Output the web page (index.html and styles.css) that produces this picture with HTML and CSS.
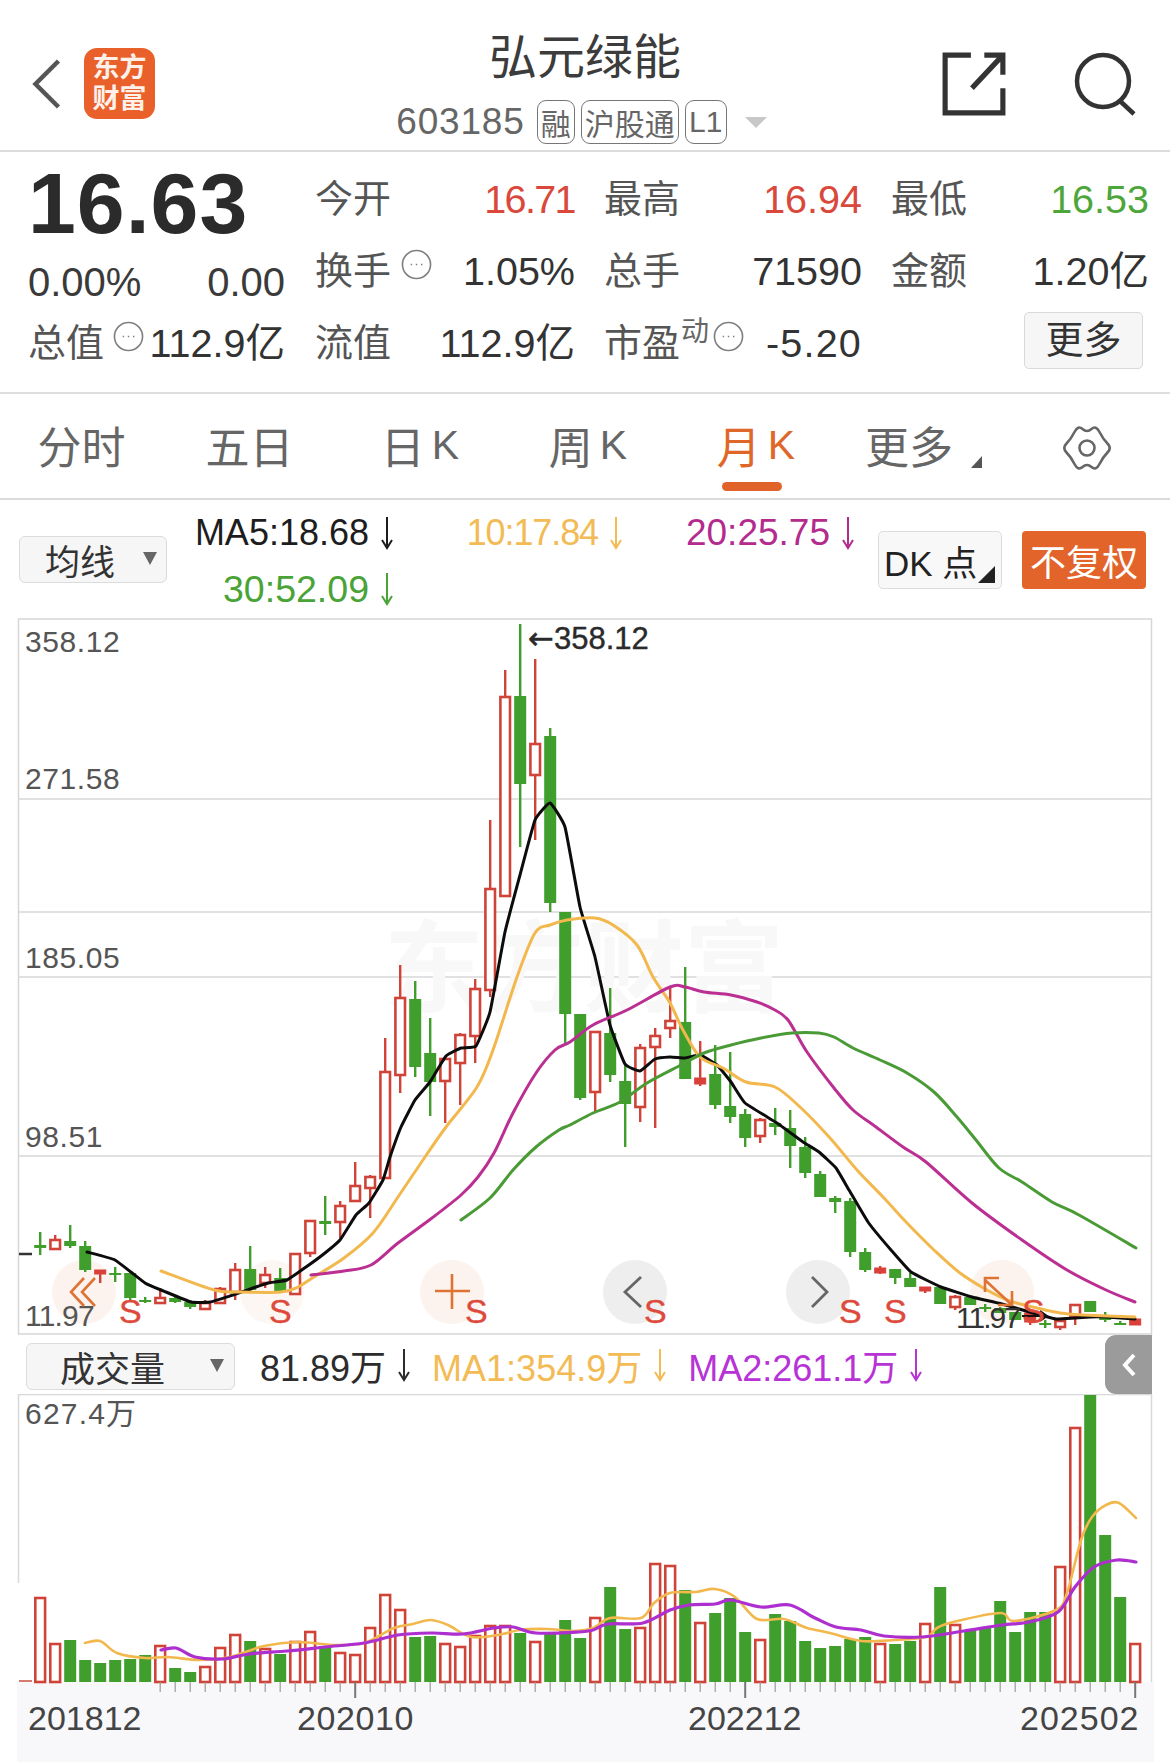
FILE: index.html
```html
<!DOCTYPE html>
<html lang="zh-CN">
<head>
<meta charset="utf-8">
<title>弘元绿能</title>
<link rel="stylesheet" href="styles.css">
</head>
<body>
<div class="page">
  <header class="topbar">
    <div class="side side-left">
      <svg class="back" viewBox="0 0 30 52"><path d="M27 3 4 26l23 23"/></svg>
      <div class="logo"><span>东方</span><span>财富</span></div>
    </div>
    <div class="center">
      <h1 class="title">弘元绿能</h1>
      <div class="sub">
        <span class="code">603185</span>
        <span class="tag tag-a">融</span>
        <span class="tag tag-b">沪股通</span>
        <span class="tag tag-c">L1</span>
        <i class="caret"></i>
      </div>
    </div>
    <div class="side side-right">
      <svg class="share" viewBox="0 0 64 64"><path d="M29 4H4v56h56V36M30 36 60 4M42 4h18v19"/></svg>
      <svg class="search" viewBox="0 0 64 64"><circle cx="30" cy="29" r="26"/><path d="M47 49l14 13"/></svg>
    </div>
  </header>

  <section class="quote">
    <div class="quote-left">
      <div class="price">16.63</div>
      <div class="change"><span>0.00%</span><span>0.00</span></div>
      <div class="cap">
        <span class="label">总值</span>
        <svg class="info info-cap" viewBox="0 0 32 32"><circle cx="16" cy="16" r="14.5"/><path d="M10 16h1.5M15.3 16h1.5M20.6 16h1.5"/></svg>
        <span class="val">112.9亿</span>
      </div>
    </div>
    <div class="quote-grid">
      <div class="cell"><span class="label">今开</span><span class="val red val-tight">16.71</span></div>
      <div class="cell"><span class="label">最高</span><span class="val red">16.94</span></div>
      <div class="cell"><span class="label">最低</span><span class="val green">16.53</span></div>
      <div class="cell">
        <span class="label-group"><span class="label">换手</span><svg class="info" viewBox="0 0 32 32"><circle cx="16" cy="16" r="14.5"/><path d="M10 16h1.5M15.3 16h1.5M20.6 16h1.5"/></svg></span>
        <span class="val">1.05%</span>
      </div>
      <div class="cell"><span class="label">总手</span><span class="val">71590</span></div>
      <div class="cell"><span class="label">金额</span><span class="val">1.20亿</span></div>
      <div class="cell"><span class="label">流值</span><span class="val">112.9亿</span></div>
      <div class="cell">
        <span class="label-group"><span class="label">市盈</span><sup class="sup">动</sup><svg class="info info-pe" viewBox="0 0 32 32"><circle cx="16" cy="16" r="14.5"/><path d="M10 16h1.5M15.3 16h1.5M20.6 16h1.5"/></svg></span>
        <span class="val val-wide">-5.20</span>
      </div>
      <div class="cell cell-end"><button class="more">更多</button></div>
    </div>
  </section>

  <nav class="tabs">
    <div class="tab tab-left">分时</div>
    <div class="tab tab-left">五日</div>
    <div class="tab">日<span class="k">K</span></div>
    <div class="tab">周<span class="k">K</span></div>
    <div class="tab active">月<span class="k">K</span></div>
    <div class="tab tab-more">更多<i class="corner"></i></div>
    <div class="tab tab-gear">
      <svg class="gear" viewBox="0 0 48 46"><path d="M3.5 18.5Q8 14 11.5 7 15 0 19.5 4 24 8 28.5 4 33 0 36.5 7 40 14 44.5 18.5 49 23 44.5 27.5 40 32 36.5 39 33 46 28.5 42 24 38 19.5 42 15 46 11.5 39 8 32 3.5 27.5-1 23 3.5 18.5Z"/><circle cx="24" cy="23" r="7.5"/></svg>
    </div>
  </nav>

  <section class="ma-bar">
    <div class="select select-ma"><span>均线</span><i class="tri"></i></div>
    <div class="ma-values">
      <span class="ma c-black">MA5:18.68<svg class="arrow" viewBox="0 0 16 34"><path d="M8 1v31M3 24l5 8 5-8"/></svg></span>
      <span class="ma c-yellow ma-tight">10:17.84<svg class="arrow" viewBox="0 0 16 34"><path d="M8 1v31M3 24l5 8 5-8"/></svg></span>
      <span class="ma c-magenta ma-wide">20:25.75<svg class="arrow" viewBox="0 0 16 34"><path d="M8 1v31M3 24l5 8 5-8"/></svg></span>
      <span class="ma c-green ma-wider">30:52.09<svg class="arrow" viewBox="0 0 16 34"><path d="M8 1v31M3 24l5 8 5-8"/></svg></span>
    </div>
    <button class="btn-dk">DK 点<i class="dk-corner"></i></button>
    <button class="btn-adj">不复权</button>
  </section>

  <svg id="kline" class="chart" viewBox="0 618 1170 717" width="1170" height="717">
    <rect class="frame" x="18.5" y="619" width="1133" height="715"/>
    <path class="grid" d="M18 799H1152M18 912H1152M18 977H1152M18 1156H1152"/>
    <text class="watermark" x="384" y="1004">东方财富</text>
    <text class="axis" x="25" y="652">358.12</text>
    <text class="axis" x="25" y="789">271.58</text>
    <text class="axis" x="25" y="968">185.05</text>
    <text class="axis" x="25" y="1147">98.51</text>
    <circle class="dot-o" cx="84" cy="1292" r="32"/>
    <circle class="dot-f" cx="272" cy="1292" r="32"/>
    <circle class="dot-o" cx="452" cy="1292" r="32"/>
    <circle class="dot-g" cx="635" cy="1292" r="32"/>
    <circle class="dot-g" cx="818" cy="1292" r="32"/>
    <circle class="dot-o" cx="1002" cy="1292" r="32"/>
    <path class="dash" d="M19 1254H32"/>
    <g id="candles"></g>
    <path id="ma5" class="line l-black"/>
    <path id="ma10" class="line l-yellow"/>
    <path id="ma20" class="line l-magenta"/>
    <path id="ma30" class="line l-green"/>
    <text class="hi" x="528" y="649"><tspan class="hi-arrow">←</tspan><tspan>358.12</tspan></text>
    <text class="axis axis-low" x="25" y="1326">11.97</text>
    <text class="lo" x="956" y="1328">11.97</text>
    <path class="lo-arrow" d="M1022 1316H1046M1040 1311l7 5-7 5"/>
    <path class="ctl-o" d="M84 1278l-13 14 13 14M95 1278l-13 14 13 14"/>
    <path class="ctl-o" d="M452 1274v35M435 1291h35"/>
    <path class="ctl-g" d="M641 1277l-16 15 16 15"/>
    <path class="ctl-g" d="M812 1277l15 15-15 15"/>
    <path class="ctl-o" d="M985 1280l27 25M985 1292v-14h14M1012 1291v14h-14"/>
    <text class="s" x="119" y="1323">S</text>
    <text class="s" x="269" y="1323">S</text>
    <text class="s" x="465" y="1323">S</text>
    <text class="s" x="644" y="1323">S</text>
    <text class="s" x="839" y="1323">S</text>
    <text class="s" x="884" y="1323">S</text>
    <text class="s" x="1022" y="1323">S</text>
  </svg>

  <section class="vol-bar">
    <div class="select select-vol"><span>成交量</span><i class="tri"></i></div>
    <span class="ma vol-val c-dark">81.89万<svg class="arrow" viewBox="0 0 16 34"><path d="M8 1v31M3 24l5 8 5-8"/></svg></span>
    <span class="ma vol-val c-yellow">MA1:354.9万<svg class="arrow" viewBox="0 0 16 34"><path d="M8 1v31M3 24l5 8 5-8"/></svg></span>
    <span class="ma vol-val c-purple">MA2:261.1万<svg class="arrow" viewBox="0 0 16 34"><path d="M8 1v31M3 24l5 8 5-8"/></svg></span>
    <div class="collapse"><svg viewBox="0 0 16 26"><path d="M13 3 4 13l9 10"/></svg></div>
  </section>

  <svg id="volume" class="chart" viewBox="0 1394 1170 368" width="1170" height="368">
    <rect class="axis-bg" x="17" y="1682" width="1137" height="80"/>
    <path class="grid" d="M18 1394.5H1152M18.5 1394V1583M1151.5 1394V1682"/>
    <text class="axis axis-vol" x="25" y="1424">627.4万</text>
    <g id="bars"></g>
    <g id="ticks"></g>
    <path id="vma1" class="line thin l-yellow"/>
    <path id="vma2" class="line l-purple"/>
    <text class="date" x="28" y="1730">201812</text>
    <text class="date date-wide" x="297" y="1730">202010</text>
    <text class="date" x="688" y="1730">202212</text>
    <text class="date date-wider" x="1020" y="1730">202502</text>
  </svg>
</div>
<script src="chart.js"></script>
</body>
</html>
```

FILE: styles.css
```css
* { box-sizing: border-box; }
html, body { margin: 0; padding: 0; background: #fff; }
body {
  font-family: "Liberation Sans", "Noto Sans CJK SC", sans-serif;
  color: #333;
}
.page { width: 1170px; height: 1762px; overflow: hidden; }
button { font: inherit; padding: 0; }
i { display: block; font-style: normal; }

/* top bar */
.topbar {
  display: grid;
  grid-template-columns: 1fr auto 1fr;
  height: 152px;
  border-bottom: 2px solid #dcdcdc;
}
.side { display: flex; align-items: center; padding-top: 17px; }
.side-left { padding-left: 31px; gap: 22px; }
.side-right { justify-content: flex-end; padding-right: 33px; gap: 66px; }
.back { width: 31px; height: 52px; fill: none; stroke: #555; stroke-width: 4.5; }
.logo {
  width: 71px; height: 71px;
  border-radius: 13px;
  background: #e9602a;
  color: #fdf1ea;
  display: flex; flex-direction: column; align-items: center; justify-content: center;
  font-size: 27px; line-height: 31px; font-weight: 700;
}
.share { width: 66px; height: 66px; fill: none; stroke: #333; stroke-width: 5; }
.search { width: 64px; height: 64px; fill: none; stroke: #333; stroke-width: 4.5; }
.center { display: flex; flex-direction: column; align-items: center; padding-top: 28px; }
.title { margin: 0; font-size: 48px; line-height: 60px; font-weight: 400; color: #3c3c3c; }
.sub { display: flex; align-items: center; gap: 6px; margin-top: 12px; height: 44px; padding-right: 7px; }
.code { font-size: 37px; color: #666; margin-right: 6px; letter-spacing: .8px; }
.tag {
  height: 44px; display: flex; align-items: center; justify-content: center;
  border: 1.5px solid #777; border-radius: 9px;
  font-size: 30px; color: #666; white-space: nowrap;
}
.tag-a { width: 38px; }
.tag-b { width: 98px; }
.tag-c { width: 42px; }
.caret {
  margin-left: 12px; width: 0; height: 0;
  border-left: 11px solid transparent; border-right: 11px solid transparent;
  border-top: 11px solid #c8c8c8;
}

/* quote */
.quote {
  display: flex;
  height: 242px;
  padding: 11px 0 0 28px;
  border-bottom: 2px solid #dedede;
}
.quote-left { width: 259px; margin-right: 28px; flex: none; }
.price {
  font-size: 86px; line-height: 80px; font-weight: 700; color: #2b2b2b;
  letter-spacing: 1px;
}
.change {
  display: flex; justify-content: space-between;
  margin-top: 19px; padding-right: 2px;
  font-size: 40px; line-height: 40px; color: #3a3a3a;
}
.cap { display: flex; align-items: center; margin-top: 21px; height: 40px; padding-right: 2px; }
.cap .val { margin-left: auto; }
.label { font-size: 38px; line-height: 44px; color: #555; white-space: nowrap; }
.val { font-size: 39.5px; line-height: 44px; color: #333; white-space: nowrap; }
.val-tight { letter-spacing: -1.6px; }
.val-wide { letter-spacing: 1.2px; }
.red { color: #d9483b; }
.green { color: #4da63a; }
.quote-grid {
  display: grid;
  grid-template-columns: 260px 258px 258px;
  grid-auto-rows: 72px;
  column-gap: 29px;
}
.cell { display: flex; align-items: center; justify-content: space-between; }
.cell-end { justify-content: flex-end; padding-right: 6px; }
.label-group { display: flex; align-items: center; }
.info {
  width: 31px; height: 31px;
  margin: 0 0 14px 10px;
  fill: none; stroke: #808080; stroke-width: 1.7;
}
.info-cap { margin: 0 0 14px 9px; flex: none; }
.info-pe { margin: 0 0 14px 4px; }
.sup { font-size: 28px; line-height: 30px; color: #666; margin: 0 0 22px 1px; }
.more {
  width: 119px; height: 57px;
  border: 1.5px solid #d9d9d9; border-radius: 5px;
  background: #f6f6f6; color: #333;
  font-size: 38px; line-height: 50px;
  margin-top: -6px;
}

/* tabs */
.tabs {
  display: flex; height: 106px;
  border-bottom: 2px solid #dadada;
}
.tab {
  position: relative;
  width: 168px; height: 104px;
  display: flex; align-items: center; justify-content: center;
  padding-bottom: 2px;
  font-size: 44px; color: #666;
}
.tab-left { padding-right: 5px; }
.k { margin-left: 7px; font-size: 41px; }
.tab.active { color: #e0672a; }
.tab.active::after {
  content: "";
  position: absolute; left: 50px; top: 88px;
  width: 60px; height: 9px; border-radius: 5px; background: #e0632a;
}
.tab-more { padding-right: 30px; }
.corner {
  position: absolute; left: 131px; top: 62px; width: 0; height: 0;
  border-left: 11px solid transparent;
  border-bottom: 12px solid #555;
}
.tab-gear { width: 160px; padding: 4px 2px 0 0; }
.gear { width: 48px; height: 46px; fill: none; stroke: #666; stroke-width: 2.6; overflow: visible; }

/* MA bar */
.ma-bar { position: relative; display: flex; height: 118px; padding-left: 19px; align-items: flex-start; }
.select {
  position: relative;
  display: flex; align-items: center;
  background: #f6f6f6; border: 1.5px solid #dcdcdc; border-radius: 6px;
  font-size: 35px; color: #333;
}
.select-ma { width: 148px; height: 47px; margin-top: 36px; padding-left: 25px; }
.tri {
  position: absolute; width: 0; height: 0;
  border-left: 7px solid transparent; border-right: 7px solid transparent;
  border-top: 13px solid #666;
}
.select-ma .tri { right: 9px; top: 15px; }
.ma-values {
  display: grid;
  grid-template-columns: 228px 229px 232px;
  grid-auto-rows: 56px;
  justify-items: end;
  margin-top: 5px;
  width: 689px;
}
.ma {
  display: inline-flex; align-items: center; height: 56px;
  font-size: 36px; white-space: nowrap;
}
.ma-tight { letter-spacing: -1.1px; }
.ma-wide { font-size: 37px; }
.ma-wider { font-size: 37.5px; }
.arrow { width: 16px; height: 34px; margin-left: 10px; fill: none; stroke: currentColor; stroke-width: 2; flex: none; }
.c-black { color: #1d1d1d; }
.c-dark { color: #2c2c2c; }
.c-yellow { color: #f2bb55; }
.c-magenta { color: #b42b8e; }
.c-green { color: #4aa336; }
.c-purple { color: #b733d6; }
.btn-dk {
  position: relative;
  width: 124px; height: 58px; margin: 31px 0 0 22px;
  background: #f8f8f8; border: 1.5px solid #dcdcdc; border-radius: 5px;
  font-size: 35px; color: #222; text-align: left; padding-left: 5px;
  white-space: nowrap;
}
.dk-corner {
  position: absolute; right: 6px; bottom: 5px; width: 0; height: 0;
  border-left: 17px solid transparent;
  border-bottom: 17px solid #222;
}
.btn-adj {
  width: 124px; height: 58px; margin: 31px 0 0 20px;
  background: #e2642b; border: 0; border-radius: 4px;
  font-size: 36px; color: #fff; white-space: nowrap;
}

/* charts */
.chart { display: block; }
.frame { fill: #fff; stroke: #d6d6d6; stroke-width: 1.5; }
.grid { fill: none; stroke: #d8d8d8; stroke-width: 1.5; }
.watermark { font-size: 100px; font-weight: 700; fill: #f8f8f8; }
.axis { font-size: 30px; fill: #555; letter-spacing: .6px; }
.axis-low { letter-spacing: -.8px; }
.axis-vol { letter-spacing: 1.2px; }
.hi { font-size: 31px; fill: #2a2a2a; stroke: #2a2a2a; stroke-width: .4; }
.hi-arrow { font-family: "DejaVu Sans", sans-serif; font-size: 31px; }
.lo { font-size: 30px; fill: #333; letter-spacing: -2px; }
.lo-arrow { fill: none; stroke: #111; stroke-width: 2; }
.date { font-size: 34px; fill: #444; letter-spacing: 0; }
.date-wide { letter-spacing: .6px; }
.date-wider { letter-spacing: 1px; }
.s { font-size: 34px; fill: #dd4a3c; stroke: #dd4a3c; stroke-width: .4; }
.dot-o { fill: #fcf3ee; }
.dot-f { fill: #fdf7f3; }
.dot-g { fill: #eeeeee; }
.dash { stroke: #333; stroke-width: 2.5; }
.ctl-o { fill: none; stroke: #dd7435; stroke-width: 2.6; }
.ctl-g { fill: none; stroke: #666; stroke-width: 2.8; }
.line { fill: none; stroke-width: 3; stroke-linejoin: round; stroke-linecap: round; }
.line.thin { stroke-width: 2.6; }
.l-black { stroke: #0c0c0c; stroke-width: 3; }
.l-yellow { stroke: #f2b84e; }
.l-magenta { stroke: #bb2f92; }
.l-green { stroke: #4a9a36; }
.l-purple { stroke: #ae2fcf; stroke-width: 3.2; }
.wick-r { stroke: #cf4338; stroke-width: 2.4; }
.wick-g { stroke: #3f9e2c; stroke-width: 2.4; }
.body-r { fill: #fff; stroke: #cf4338; stroke-width: 2.6; }
.body-f { fill: #d9403a; stroke: #d9403a; stroke-width: 1; }
.body-g { fill: #3f9e2c; }
.axis-bg { fill: #f8f8fb; }
.tick { stroke: #9a9a9a; stroke-width: 1.2; }
.tick-major { stroke: #777; stroke-width: 2; }
.vol-base { stroke: #c9503f; stroke-width: 1.5; }

/* volume header */
.vol-bar { position: relative; display: flex; align-items: center; height: 59px; padding-left: 26px; }
.select-vol { width: 209px; height: 47px; padding-left: 33px; margin: 3px 25px 0 0; }
.select-vol .tri { right: 10px; top: 15px; }
.vol-val { margin-right: 20px; }
.collapse {
  position: absolute; left: 1105px; top: 0;
  width: 47px; height: 59px;
  background: #9b9b9b;
  border-radius: 11px 0 0 11px;
  display: flex; align-items: center; justify-content: center;
}
.collapse svg { width: 16px; height: 26px; fill: none; stroke: #fff; stroke-width: 4; }
```

FILE: chart.js
```js
(function () {
  var NS = 'http://www.w3.org/2000/svg';
  function el(tag, attrs, parent) {
    var n = document.createElementNS(NS, tag);
    for (var k in attrs) n.setAttribute(k, attrs[k]);
    parent.appendChild(n);
    return n;
  }
  function cx(i) { return 40.2 + 15 * i; }

  // type (g green, r hollow red, f solid red), wick top, body top, body bottom, wick bottom
  var candles = [
    ['g',1232,1245,1248,1255],['r',1235,1240,1249,1250],['g',1225,1241,1246,1248],['g',1241,1246,1270,1272],
    ['f',1270,1270,1274,1283],['g',1267,1273,1275,1282],['g',1273,1273,1298,1300],['g',1297,1300,1302,1303],
    ['r',1288,1298,1303,1304],['g',1296,1298,1302,1303],['g',1300,1302,1307,1309],['r',1300,1303,1309,1310],
    ['r',1287,1289,1303,1303],['r',1263,1270,1292,1300],['g',1246,1269,1290,1292],['r',1267,1275,1283,1288],
    ['g',1268,1278,1292,1293],['r',1254,1254,1294,1294],['r',1221,1221,1253,1257],['g',1196,1221,1224,1235],
    ['r',1201,1206,1222,1238],['r',1162,1186,1201,1202],['r',1175,1177,1188,1218],['r',1038,1072,1178,1178],
    ['r',965,998,1075,1093],['g',981,999,1067,1077],['g',1018,1053,1082,1116],['r',1057,1059,1081,1123],
    ['r',1033,1035,1063,1105],['r',979,989,1036,1063],['r',820,889,990,997],['r',670,697,896,897],
    ['g',624,696,784,847],['r',659,744,775,840],['g',728,736,903,912],['g',912,912,1014,1043],
    ['g',1014,1014,1098,1100],['r',1032,1032,1092,1112],['g',988,1033,1075,1082],['g',1063,1081,1104,1147],
    ['r',1044,1048,1107,1122],['r',1028,1036,1047,1128],['r',988,1021,1028,1038],['g',967,1022,1079,1079],
    ['f',1041,1078,1084,1086],['g',1045,1074,1105,1109],['g',1052,1106,1117,1123],['g',1109,1114,1138,1147],
    ['r',1118,1120,1136,1143],['g',1108,1123,1127,1135],['g',1110,1128,1146,1168],['g',1137,1147,1173,1178],
    ['g',1171,1174,1197,1197],['g',1196,1198,1202,1213],['g',1198,1201,1252,1257],['g',1248,1252,1270,1272],
    ['f',1266,1268,1273,1274],['g',1269,1269,1278,1284],['g',1273,1278,1287,1287],['f',1287,1287,1291,1293],
    ['g',1287,1287,1304,1304],['r',1295,1297,1307,1310],['g',1297,1297,1305,1305],['g',1304,1307,1309,1312],
    ['g',1307,1308,1313,1313],['g',1312,1312,1320,1320],['f',1313,1313,1322,1325],['g',1320,1323,1325,1328],
    ['r',1319,1321,1327,1330],['r',1305,1305,1316,1325],['g',1301,1301,1312,1312],['g',1312,1315,1320,1322],
    ['g',1321,1323,1324,1325],['f',1319,1319,1325,1325]
  ];

  var cg = document.getElementById('candles');
  candles.forEach(function (c, i) {
    var x = cx(i), t = c[0];
    el('line', { x1: x, x2: x, y1: c[1], y2: c[4], 'class': t === 'g' ? 'wick-g' : 'wick-r' }, cg);
    if (t === 'g') el('rect', { x: x - 6, y: c[2], width: 12, height: Math.max(c[3] - c[2], 2), 'class': 'body-g' }, cg);
    else if (t === 'f') el('rect', { x: x - 5.5, y: c[2], width: 11, height: c[3] - c[2], 'class': 'body-f' }, cg);
    else el('rect', { x: x - 4.8, y: c[2], width: 9.6, height: c[3] - c[2], 'class': 'body-r' }, cg);
  });

  var vols = 'r1597 r1643 g1640 g1660 g1663 g1660 g1659 g1655 r1645 g1668 g1672 r1666 r1647 r1634 g1641 r1648 g1654 r1641 r1631 g1648 r1652 r1654 r1627 r1594 r1609 g1637 g1636 r1643 r1646 r1635 r1625 r1625 g1633 r1641 g1633 g1620 g1638 r1617 g1587 g1629 r1627 r1563 r1565 g1590 r1622 g1613 g1598 g1632 r1639 g1614 g1621 g1641 g1648 g1646 g1639 g1637 r1643 g1644 g1641 r1623 g1587 r1624 g1630 g1627 g1601 g1632 g1612 g1612 r1566 r1427 g1395 g1535 g1597 r1643'.split(' ');
  var BASE = 1682;
  var bg = document.getElementById('bars');
  el('line', { x1: 19, x2: 32, y1: BASE - 1, y2: BASE - 1, 'class': 'vol-base' }, bg);
  vols.forEach(function (v, i) {
    var x = cx(i), y = +v.slice(1);
    if (v[0] === 'g') el('rect', { x: x - 6, y: y, width: 12, height: BASE - y, 'class': 'body-g' }, bg);
    else el('rect', { x: x - 4.9, y: y + 1, width: 9.8, height: BASE - y - 1, 'class': 'body-r' }, bg);
  });

  var tg = document.getElementById('ticks');
  for (var i = 8; i < 74; i++) {
    var major = i === 21 || i === 47 || i === 73;
    el('line', { x1: cx(i), x2: cx(i), y1: BASE, y2: BASE + (major ? 16 : 10), 'class': major ? 'tick-major' : 'tick' }, tg);
  }

  // Catmull-Rom through the sampled points; a small k keeps corners sharp (the MA5 line)
  function toPath(str, k) {
    var p = str.split(' ').map(function (s) { return s.split(',').map(Number); });
    var d = 'M' + p[0][0] + ' ' + p[0][1];
    for (var j = 0; j < p.length - 1; j++) {
      var a = p[j - 1] || p[j], b = p[j], c = p[j + 1], e = p[j + 2] || c;
      d += 'C' + (b[0] + (c[0] - a[0]) * k).toFixed(1) + ' ' + (b[1] + (c[1] - a[1]) * k).toFixed(1) + ' ' +
        (c[0] - (e[0] - b[0]) * k).toFixed(1) + ' ' + (c[1] - (e[1] - b[1]) * k).toFixed(1) + ' ' + c[0] + ' ' + c[1];
    }
    return d;
  }

  var lines = {
    ma5: '87,1252 115,1260 145,1283 161,1290 191,1302 210,1302 233,1295 253,1288 268,1283 287,1280 306,1267 325,1253 340,1240 356,1215 369,1203 383,1180 390,1157 401,1127 415,1100 430,1082 446,1056 461,1048 476,1046 490,1012 505,932 520,875 535,820 550,803 565,827 580,907 595,957 610,1025 625,1064 640,1071 655,1059 670,1057 685,1058 700,1055 717,1065 731,1082 745,1103 777,1123 803,1142 819,1152 836,1168 849,1190 868,1222 891,1250 911,1272 941,1287 972,1297 1002,1304 1033,1313 1056,1319 1075,1318 1090,1317 1106,1317 1135,1319',
    ma10: '161,1271 214,1290 240,1292 281,1292 298,1287 314,1277 344,1258 373,1233 398,1197 425,1157 446,1127 477,1087 493,1050 517,977 535,933 550,925 567,920 595,918 613,925 637,945 653,977 670,1003 683,1030 700,1057 723,1068 746,1082 775,1087 800,1107 830,1138 857,1170 884,1198 907,1223 934,1250 960,1273 987,1290 1010,1301 1037,1308 1060,1313 1083,1315 1135,1317',
    ma20: '311,1275 344,1271 371,1265 398,1243 432,1218 461,1195 478,1177 494,1153 513,1113 536,1073 555,1050 570,1042 593,1025 627,1010 670,987 685,987 704,992 731,995 757,1002 773,1009 788,1020 807,1052 834,1088 853,1110 876,1127 903,1147 926,1162 972,1203 1022,1240 1067,1270 1106,1290 1135,1302',
    ma30: '461,1220 490,1198 513,1170 536,1147 559,1130 570,1125 593,1113 620,1102 647,1083 681,1065 704,1053 731,1045 761,1038 792,1033 819,1033 834,1037 853,1048 880,1060 907,1073 934,1092 957,1117 976,1140 999,1168 1022,1182 1052,1202 1079,1215 1136,1248',
    vma1: '85,1643 100,1641 117,1653 145,1658 168,1657 199,1660 230,1657 264,1646 298,1642 333,1645 364,1643 394,1628 413,1624 431,1620 448,1625 471,1637 498,1635 520,1630 547,1629 574,1631 593,1628 610,1618 641,1618 654,1603 670,1593 696,1592 715,1589 735,1597 757,1619 784,1619 807,1628 830,1633 861,1641 895,1640 926,1637 937,1628 953,1622 1000,1613 1014,1621 1056,1610 1067,1593 1081,1540 1092,1517 1106,1505 1119,1503 1136,1518',
    vma2: '161,1650 176,1648 195,1657 222,1659 249,1654 287,1651 325,1647 364,1643 398,1635 432,1633 463,1634 494,1628 513,1627 536,1633 578,1632 593,1630 608,1624 643,1623 670,1610 689,1605 715,1604 731,1600 761,1607 790,1605 815,1618 836,1627 861,1630 884,1636 922,1637 964,1631 1002,1625 1029,1622 1058,1612 1075,1587 1094,1567 1117,1560 1136,1562'
  };
  Object.keys(lines).forEach(function (id) {
    document.getElementById(id).setAttribute('d', toPath(lines[id], id === 'ma5' ? 0.06 : 0.16));
  });
})();
```
